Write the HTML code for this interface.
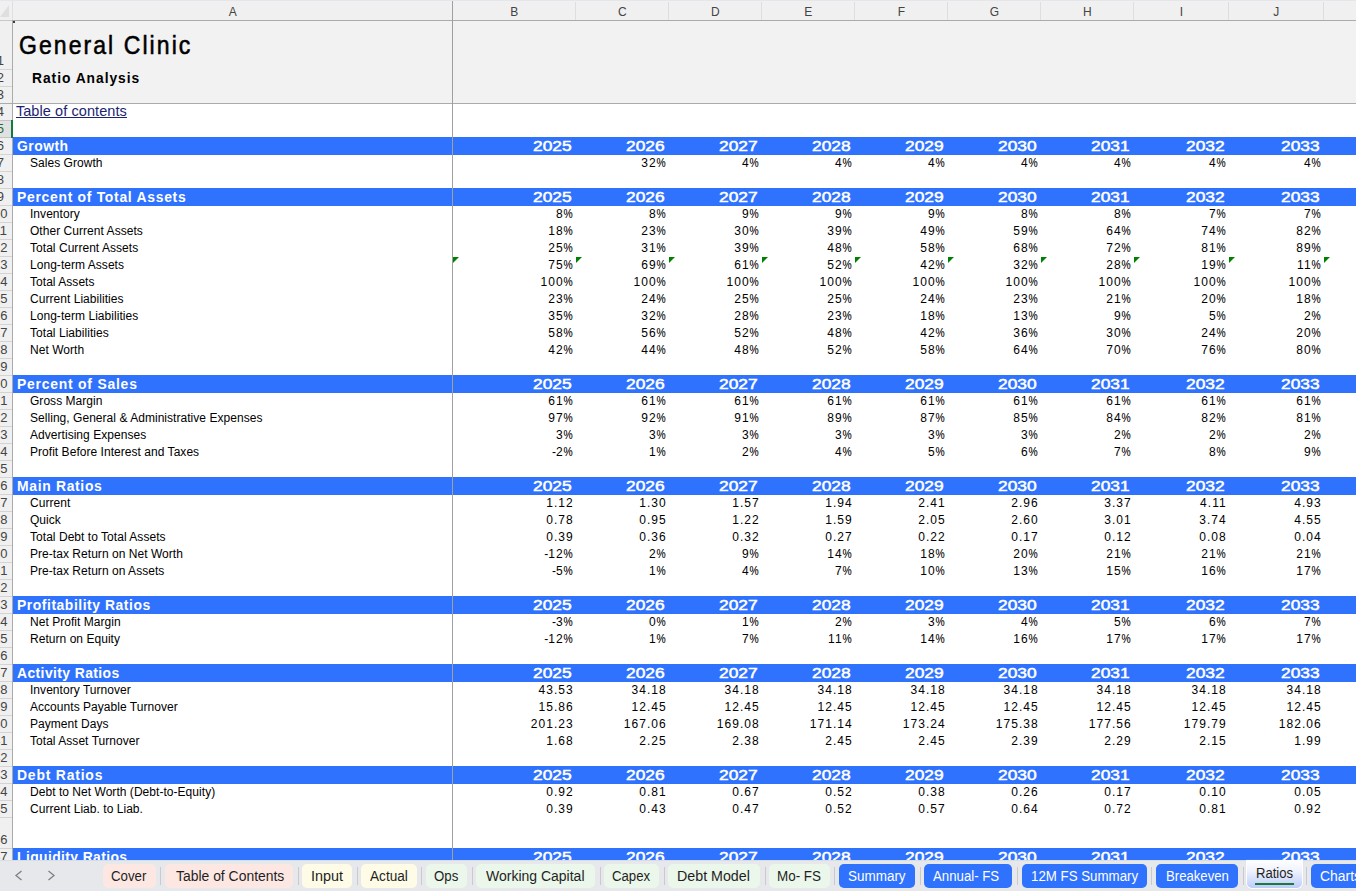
<!DOCTYPE html>
<html><head><meta charset="utf-8"><title>Ratios</title>
<style>
*{margin:0;padding:0;box-sizing:border-box}
html,body{width:1356px;height:891px;overflow:hidden;background:#fff;font-family:"Liberation Sans",sans-serif}
.a{position:absolute}
.t{position:absolute;white-space:nowrap;line-height:1}
.lab{font-size:12px;color:#000;letter-spacing:0.04px}
.num{font-size:12px;color:#000;text-align:right}
.mn{letter-spacing:0}
.pc{display:inline-block;letter-spacing:0;transform:scaleX(0.86);transform-origin:100% 50%;margin-left:-1.8px;-webkit-text-stroke:0.1px #000}
.ch{font-size:12px;color:#444;text-align:center}
.rh{font-size:13px;color:#444;text-align:center}
.tab{position:absolute;top:864px;height:24px;border-radius:5px}
.sep{position:absolute;top:867px;width:1px;height:18px;background:#c9cacc}
.tri{position:absolute;width:0;height:0;border-top:6px solid #008000;border-right:6px solid transparent}
</style></head><body>

<div class="a" style="left:13px;top:21px;width:1343px;height:82px;background:#f2f2f2"></div>
<div class="a" style="left:0;top:0;width:1356px;height:20px;background:#f0f0f0"></div>
<div class="a" style="left:0;top:0;width:1356px;height:1px;background:#e3e7ec"></div>
<div class="a" style="left:0;top:5px;width:0;height:0;border-left:9px solid transparent;border-bottom:12px solid #dfdfdf"></div>
<div class="a" style="left:0;top:21px;width:12px;height:839px;background:#f0f0f0"></div>
<div class="a" style="left:0;top:121px;width:11px;height:16px;background:#e1e1e1"></div>
<div class="a" style="left:575px;top:2px;width:1px;height:18px;background:#dedede"></div>
<div class="a" style="left:668px;top:2px;width:1px;height:18px;background:#dedede"></div>
<div class="a" style="left:761px;top:2px;width:1px;height:18px;background:#dedede"></div>
<div class="a" style="left:854px;top:2px;width:1px;height:18px;background:#dedede"></div>
<div class="a" style="left:947px;top:2px;width:1px;height:18px;background:#dedede"></div>
<div class="a" style="left:1040px;top:2px;width:1px;height:18px;background:#dedede"></div>
<div class="a" style="left:1133px;top:2px;width:1px;height:18px;background:#dedede"></div>
<div class="a" style="left:1228px;top:2px;width:1px;height:18px;background:#dedede"></div>
<div class="a" style="left:1323px;top:2px;width:1px;height:18px;background:#dedede"></div>
<div class="a" style="left:12px;top:1px;width:1px;height:19px;background:#e0e0e0"></div>
<div class="t ch" style="left:212.8px;top:6px;width:40px">A</div>
<div class="t ch" style="left:494.3px;top:6px;width:40px">B</div>
<div class="t ch" style="left:602.3px;top:6px;width:40px">C</div>
<div class="t ch" style="left:695.3px;top:6px;width:40px">D</div>
<div class="t ch" style="left:788.3px;top:6px;width:40px">E</div>
<div class="t ch" style="left:881.3px;top:6px;width:40px">F</div>
<div class="t ch" style="left:974.3px;top:6px;width:40px">G</div>
<div class="t ch" style="left:1067.3px;top:6px;width:40px">H</div>
<div class="t ch" style="left:1161.3px;top:6px;width:40px">I</div>
<div class="t ch" style="left:1256.3px;top:6px;width:40px">J</div>
<div class="t rh" style="left:-19.7px;top:53.7px;width:40px;color:#444">1</div>
<div class="a" style="left:0;top:69px;width:12px;height:1px;background:#d4d4d4"></div>
<div class="t rh" style="left:-19.7px;top:70.7px;width:40px;color:#444">2</div>
<div class="a" style="left:0;top:86px;width:12px;height:1px;background:#d4d4d4"></div>
<div class="t rh" style="left:-19.7px;top:87.7px;width:40px;color:#444">3</div>
<div class="t rh" style="left:-19.7px;top:104.7px;width:40px;color:#444">4</div>
<div class="a" style="left:0;top:120px;width:12px;height:1px;background:#d4d4d4"></div>
<div class="t rh" style="left:-19.7px;top:121.7px;width:40px;color:#1e6b3a">5</div>
<div class="a" style="left:0;top:137px;width:12px;height:1px;background:#d4d4d4"></div>
<div class="t rh" style="left:-19.7px;top:138.7px;width:40px;color:#444">6</div>
<div class="a" style="left:0;top:154px;width:12px;height:1px;background:#d4d4d4"></div>
<div class="t rh" style="left:-19.7px;top:155.7px;width:40px;color:#444">7</div>
<div class="a" style="left:0;top:171px;width:12px;height:1px;background:#d4d4d4"></div>
<div class="t rh" style="left:-19.7px;top:172.7px;width:40px;color:#444">8</div>
<div class="a" style="left:0;top:188px;width:12px;height:1px;background:#d4d4d4"></div>
<div class="t rh" style="left:-19.7px;top:189.7px;width:40px;color:#444">9</div>
<div class="a" style="left:0;top:205px;width:12px;height:1px;background:#d4d4d4"></div>
<div class="t rh" style="left:-19.7px;top:206.7px;width:40px;color:#444">10</div>
<div class="a" style="left:0;top:222px;width:12px;height:1px;background:#d4d4d4"></div>
<div class="t rh" style="left:-19.7px;top:223.7px;width:40px;color:#444">11</div>
<div class="a" style="left:0;top:239px;width:12px;height:1px;background:#d4d4d4"></div>
<div class="t rh" style="left:-19.7px;top:240.7px;width:40px;color:#444">12</div>
<div class="a" style="left:0;top:256px;width:12px;height:1px;background:#d4d4d4"></div>
<div class="t rh" style="left:-19.7px;top:257.7px;width:40px;color:#444">13</div>
<div class="a" style="left:0;top:273px;width:12px;height:1px;background:#d4d4d4"></div>
<div class="t rh" style="left:-19.7px;top:274.7px;width:40px;color:#444">14</div>
<div class="a" style="left:0;top:290px;width:12px;height:1px;background:#d4d4d4"></div>
<div class="t rh" style="left:-19.7px;top:291.7px;width:40px;color:#444">15</div>
<div class="a" style="left:0;top:307px;width:12px;height:1px;background:#d4d4d4"></div>
<div class="t rh" style="left:-19.7px;top:308.7px;width:40px;color:#444">16</div>
<div class="a" style="left:0;top:324px;width:12px;height:1px;background:#d4d4d4"></div>
<div class="t rh" style="left:-19.7px;top:325.7px;width:40px;color:#444">17</div>
<div class="a" style="left:0;top:341px;width:12px;height:1px;background:#d4d4d4"></div>
<div class="t rh" style="left:-19.7px;top:342.7px;width:40px;color:#444">18</div>
<div class="a" style="left:0;top:358px;width:12px;height:1px;background:#d4d4d4"></div>
<div class="t rh" style="left:-19.7px;top:359.7px;width:40px;color:#444">19</div>
<div class="a" style="left:0;top:375px;width:12px;height:1px;background:#d4d4d4"></div>
<div class="t rh" style="left:-19.7px;top:376.7px;width:40px;color:#444">20</div>
<div class="a" style="left:0;top:392px;width:12px;height:1px;background:#d4d4d4"></div>
<div class="t rh" style="left:-19.7px;top:393.7px;width:40px;color:#444">21</div>
<div class="a" style="left:0;top:409px;width:12px;height:1px;background:#d4d4d4"></div>
<div class="t rh" style="left:-19.7px;top:410.7px;width:40px;color:#444">22</div>
<div class="a" style="left:0;top:426px;width:12px;height:1px;background:#d4d4d4"></div>
<div class="t rh" style="left:-19.7px;top:427.7px;width:40px;color:#444">23</div>
<div class="a" style="left:0;top:443px;width:12px;height:1px;background:#d4d4d4"></div>
<div class="t rh" style="left:-19.7px;top:444.7px;width:40px;color:#444">24</div>
<div class="a" style="left:0;top:460px;width:12px;height:1px;background:#d4d4d4"></div>
<div class="t rh" style="left:-19.7px;top:461.7px;width:40px;color:#444">25</div>
<div class="a" style="left:0;top:477px;width:12px;height:1px;background:#d4d4d4"></div>
<div class="t rh" style="left:-19.7px;top:478.7px;width:40px;color:#444">26</div>
<div class="a" style="left:0;top:494px;width:12px;height:1px;background:#d4d4d4"></div>
<div class="t rh" style="left:-19.7px;top:495.7px;width:40px;color:#444">27</div>
<div class="a" style="left:0;top:511px;width:12px;height:1px;background:#d4d4d4"></div>
<div class="t rh" style="left:-19.7px;top:512.7px;width:40px;color:#444">28</div>
<div class="a" style="left:0;top:528px;width:12px;height:1px;background:#d4d4d4"></div>
<div class="t rh" style="left:-19.7px;top:529.7px;width:40px;color:#444">29</div>
<div class="a" style="left:0;top:545px;width:12px;height:1px;background:#d4d4d4"></div>
<div class="t rh" style="left:-19.7px;top:546.7px;width:40px;color:#444">30</div>
<div class="a" style="left:0;top:562px;width:12px;height:1px;background:#d4d4d4"></div>
<div class="t rh" style="left:-19.7px;top:563.7px;width:40px;color:#444">31</div>
<div class="a" style="left:0;top:579px;width:12px;height:1px;background:#d4d4d4"></div>
<div class="t rh" style="left:-19.7px;top:580.7px;width:40px;color:#444">32</div>
<div class="a" style="left:0;top:596px;width:12px;height:1px;background:#d4d4d4"></div>
<div class="t rh" style="left:-19.7px;top:597.7px;width:40px;color:#444">33</div>
<div class="a" style="left:0;top:613px;width:12px;height:1px;background:#d4d4d4"></div>
<div class="t rh" style="left:-19.7px;top:614.7px;width:40px;color:#444">34</div>
<div class="a" style="left:0;top:630px;width:12px;height:1px;background:#d4d4d4"></div>
<div class="t rh" style="left:-19.7px;top:631.7px;width:40px;color:#444">35</div>
<div class="a" style="left:0;top:647px;width:12px;height:1px;background:#d4d4d4"></div>
<div class="t rh" style="left:-19.7px;top:648.7px;width:40px;color:#444">36</div>
<div class="a" style="left:0;top:664px;width:12px;height:1px;background:#d4d4d4"></div>
<div class="t rh" style="left:-19.7px;top:665.7px;width:40px;color:#444">37</div>
<div class="a" style="left:0;top:681px;width:12px;height:1px;background:#d4d4d4"></div>
<div class="t rh" style="left:-19.7px;top:682.7px;width:40px;color:#444">38</div>
<div class="a" style="left:0;top:698px;width:12px;height:1px;background:#d4d4d4"></div>
<div class="t rh" style="left:-19.7px;top:699.7px;width:40px;color:#444">39</div>
<div class="a" style="left:0;top:715px;width:12px;height:1px;background:#d4d4d4"></div>
<div class="t rh" style="left:-19.7px;top:716.7px;width:40px;color:#444">40</div>
<div class="a" style="left:0;top:732px;width:12px;height:1px;background:#d4d4d4"></div>
<div class="t rh" style="left:-19.7px;top:733.7px;width:40px;color:#444">41</div>
<div class="a" style="left:0;top:749px;width:12px;height:1px;background:#d4d4d4"></div>
<div class="t rh" style="left:-19.7px;top:750.7px;width:40px;color:#444">42</div>
<div class="a" style="left:0;top:766px;width:12px;height:1px;background:#d4d4d4"></div>
<div class="t rh" style="left:-19.7px;top:767.7px;width:40px;color:#444">43</div>
<div class="a" style="left:0;top:783px;width:12px;height:1px;background:#d4d4d4"></div>
<div class="t rh" style="left:-19.7px;top:784.7px;width:40px;color:#444">44</div>
<div class="a" style="left:0;top:800px;width:12px;height:1px;background:#d4d4d4"></div>
<div class="t rh" style="left:-19.7px;top:801.7px;width:40px;color:#444">45</div>
<div class="a" style="left:0;top:817px;width:12px;height:1px;background:#d4d4d4"></div>
<div class="t rh" style="left:-19.7px;top:832.7px;width:40px;color:#444">46</div>
<div class="a" style="left:0;top:848px;width:12px;height:1px;background:#d4d4d4"></div>
<div class="t rh" style="left:-19.7px;top:849.7px;width:40px;color:#444">47</div>
<div class="a" style="left:0;top:120px;width:12px;height:1px;background:#c4c4c4"></div>
<div class="a" style="left:0;top:137px;width:12px;height:1px;background:#c4c4c4"></div>
<div class="a" style="left:13px;top:137px;width:1343px;height:18px;background:#2f72fd"></div>
<div class="a" style="left:13px;top:188px;width:1343px;height:18px;background:#2f72fd"></div>
<div class="a" style="left:13px;top:375px;width:1343px;height:18px;background:#2f72fd"></div>
<div class="a" style="left:13px;top:477px;width:1343px;height:18px;background:#2f72fd"></div>
<div class="a" style="left:13px;top:596px;width:1343px;height:18px;background:#2f72fd"></div>
<div class="a" style="left:13px;top:664px;width:1343px;height:18px;background:#2f72fd"></div>
<div class="a" style="left:13px;top:766px;width:1343px;height:18px;background:#2f72fd"></div>
<div class="a" style="left:13px;top:848px;width:1343px;height:18px;background:#2f72fd"></div>
<div class="a" style="left:12px;top:20px;width:1344px;height:1px;background:#ababab"></div>
<div class="a" style="left:0;top:20px;width:12px;height:1px;background:#c8c8c8"></div>
<div class="a" style="left:0;top:103px;width:1356px;height:1px;background:#ababab"></div>
<div class="a" style="left:12px;top:21px;width:1px;height:839px;background:#ababab"></div>
<div class="a" style="left:452px;top:1px;width:1px;height:859px;background:#9f9f9f"></div>
<div class="a" style="left:11px;top:120px;width:2px;height:18px;background:#107c41"></div>
<div class="a" style="left:13px;top:21px;width:2px;height:2px;border-radius:1px;background:#000"></div>
<div class="t" style="left:18.70px;top:32.74px;font-size:25px;font-weight:normal;color:#000;letter-spacing:2.246px;transform:scaleX(0.92);transform-origin:0 0;-webkit-text-stroke:0.55px #000">General Clinic</div>
<div class="t" style="left:31.70px;top:70.30px;font-size:15px;font-weight:bold;color:#000;letter-spacing:1.056px;transform:scaleX(0.92);transform-origin:0 0;">Ratio Analysis</div>
<div class="t" style="left:15.90px;top:103.53px;font-size:14.5px;font-weight:normal;color:#1a2472;letter-spacing:0.078px;">Table of contents</div>
<div class="a" style="left:16px;top:117px;width:111px;height:1px;background:#1a2472"></div>
<div class="t" style="left:16.90px;top:138.53px;font-size:14.5px;font-weight:bold;color:#fff;letter-spacing:0.496px;transform:scaleX(0.96);transform-origin:0 0;">Growth</div>
<div class="t" style="left:533.20px;top:138.80px;font-size:14.3px;font-weight:normal;color:#fff;transform:scaleX(1.2154);transform-origin:0 0;-webkit-text-stroke:0.5px #fff">2025</div>
<div class="t" style="left:626.20px;top:138.80px;font-size:14.3px;font-weight:normal;color:#fff;transform:scaleX(1.2154);transform-origin:0 0;-webkit-text-stroke:0.5px #fff">2026</div>
<div class="t" style="left:719.20px;top:138.80px;font-size:14.3px;font-weight:normal;color:#fff;transform:scaleX(1.2154);transform-origin:0 0;-webkit-text-stroke:0.5px #fff">2027</div>
<div class="t" style="left:812.20px;top:138.80px;font-size:14.3px;font-weight:normal;color:#fff;transform:scaleX(1.2154);transform-origin:0 0;-webkit-text-stroke:0.5px #fff">2028</div>
<div class="t" style="left:905.20px;top:138.80px;font-size:14.3px;font-weight:normal;color:#fff;transform:scaleX(1.2154);transform-origin:0 0;-webkit-text-stroke:0.5px #fff">2029</div>
<div class="t" style="left:998.20px;top:138.80px;font-size:14.3px;font-weight:normal;color:#fff;transform:scaleX(1.2154);transform-origin:0 0;-webkit-text-stroke:0.5px #fff">2030</div>
<div class="t" style="left:1091.20px;top:138.80px;font-size:14.3px;font-weight:normal;color:#fff;transform:scaleX(1.2154);transform-origin:0 0;-webkit-text-stroke:0.5px #fff">2031</div>
<div class="t" style="left:1186.20px;top:138.80px;font-size:14.3px;font-weight:normal;color:#fff;transform:scaleX(1.2154);transform-origin:0 0;-webkit-text-stroke:0.5px #fff">2032</div>
<div class="t" style="left:1281.20px;top:138.80px;font-size:14.3px;font-weight:normal;color:#fff;transform:scaleX(1.2154);transform-origin:0 0;-webkit-text-stroke:0.5px #fff">2033</div>
<div class="t lab" style="left:30px;top:157px">Sales Growth</div>
<div class="t num" style="left:575px;top:157px;width:90.60px;letter-spacing:1.1px">32<span class="pc">%</span></div>
<div class="t num" style="left:668px;top:157px;width:90.60px;letter-spacing:1.1px">4<span class="pc">%</span></div>
<div class="t num" style="left:761px;top:157px;width:90.60px;letter-spacing:1.1px">4<span class="pc">%</span></div>
<div class="t num" style="left:854px;top:157px;width:90.60px;letter-spacing:1.1px">4<span class="pc">%</span></div>
<div class="t num" style="left:947px;top:157px;width:90.60px;letter-spacing:1.1px">4<span class="pc">%</span></div>
<div class="t num" style="left:1040px;top:157px;width:90.60px;letter-spacing:1.1px">4<span class="pc">%</span></div>
<div class="t num" style="left:1133px;top:157px;width:92.60px;letter-spacing:1.1px">4<span class="pc">%</span></div>
<div class="t num" style="left:1228px;top:157px;width:92.60px;letter-spacing:1.1px">4<span class="pc">%</span></div>
<div class="t" style="left:17.30px;top:189.53px;font-size:14.5px;font-weight:bold;color:#fff;letter-spacing:0.735px;transform:scaleX(0.96);transform-origin:0 0;">Percent of Total Assets</div>
<div class="t" style="left:533.20px;top:189.80px;font-size:14.3px;font-weight:normal;color:#fff;transform:scaleX(1.2154);transform-origin:0 0;-webkit-text-stroke:0.5px #fff">2025</div>
<div class="t" style="left:626.20px;top:189.80px;font-size:14.3px;font-weight:normal;color:#fff;transform:scaleX(1.2154);transform-origin:0 0;-webkit-text-stroke:0.5px #fff">2026</div>
<div class="t" style="left:719.20px;top:189.80px;font-size:14.3px;font-weight:normal;color:#fff;transform:scaleX(1.2154);transform-origin:0 0;-webkit-text-stroke:0.5px #fff">2027</div>
<div class="t" style="left:812.20px;top:189.80px;font-size:14.3px;font-weight:normal;color:#fff;transform:scaleX(1.2154);transform-origin:0 0;-webkit-text-stroke:0.5px #fff">2028</div>
<div class="t" style="left:905.20px;top:189.80px;font-size:14.3px;font-weight:normal;color:#fff;transform:scaleX(1.2154);transform-origin:0 0;-webkit-text-stroke:0.5px #fff">2029</div>
<div class="t" style="left:998.20px;top:189.80px;font-size:14.3px;font-weight:normal;color:#fff;transform:scaleX(1.2154);transform-origin:0 0;-webkit-text-stroke:0.5px #fff">2030</div>
<div class="t" style="left:1091.20px;top:189.80px;font-size:14.3px;font-weight:normal;color:#fff;transform:scaleX(1.2154);transform-origin:0 0;-webkit-text-stroke:0.5px #fff">2031</div>
<div class="t" style="left:1186.20px;top:189.80px;font-size:14.3px;font-weight:normal;color:#fff;transform:scaleX(1.2154);transform-origin:0 0;-webkit-text-stroke:0.5px #fff">2032</div>
<div class="t" style="left:1281.20px;top:189.80px;font-size:14.3px;font-weight:normal;color:#fff;transform:scaleX(1.2154);transform-origin:0 0;-webkit-text-stroke:0.5px #fff">2033</div>
<div class="t lab" style="left:30px;top:208px">Inventory</div>
<div class="t num" style="left:452px;top:208px;width:120.60px;letter-spacing:1.1px">8<span class="pc">%</span></div>
<div class="t num" style="left:575px;top:208px;width:90.60px;letter-spacing:1.1px">8<span class="pc">%</span></div>
<div class="t num" style="left:668px;top:208px;width:90.60px;letter-spacing:1.1px">9<span class="pc">%</span></div>
<div class="t num" style="left:761px;top:208px;width:90.60px;letter-spacing:1.1px">9<span class="pc">%</span></div>
<div class="t num" style="left:854px;top:208px;width:90.60px;letter-spacing:1.1px">9<span class="pc">%</span></div>
<div class="t num" style="left:947px;top:208px;width:90.60px;letter-spacing:1.1px">8<span class="pc">%</span></div>
<div class="t num" style="left:1040px;top:208px;width:90.60px;letter-spacing:1.1px">8<span class="pc">%</span></div>
<div class="t num" style="left:1133px;top:208px;width:92.60px;letter-spacing:1.1px">7<span class="pc">%</span></div>
<div class="t num" style="left:1228px;top:208px;width:92.60px;letter-spacing:1.1px">7<span class="pc">%</span></div>
<div class="t lab" style="left:30px;top:225px">Other Current Assets</div>
<div class="t num" style="left:452px;top:225px;width:120.60px;letter-spacing:1.1px">18<span class="pc">%</span></div>
<div class="t num" style="left:575px;top:225px;width:90.60px;letter-spacing:1.1px">23<span class="pc">%</span></div>
<div class="t num" style="left:668px;top:225px;width:90.60px;letter-spacing:1.1px">30<span class="pc">%</span></div>
<div class="t num" style="left:761px;top:225px;width:90.60px;letter-spacing:1.1px">39<span class="pc">%</span></div>
<div class="t num" style="left:854px;top:225px;width:90.60px;letter-spacing:1.1px">49<span class="pc">%</span></div>
<div class="t num" style="left:947px;top:225px;width:90.60px;letter-spacing:1.1px">59<span class="pc">%</span></div>
<div class="t num" style="left:1040px;top:225px;width:90.60px;letter-spacing:1.1px">64<span class="pc">%</span></div>
<div class="t num" style="left:1133px;top:225px;width:92.60px;letter-spacing:1.1px">74<span class="pc">%</span></div>
<div class="t num" style="left:1228px;top:225px;width:92.60px;letter-spacing:1.1px">82<span class="pc">%</span></div>
<div class="t lab" style="left:30px;top:242px">Total Current Assets</div>
<div class="t num" style="left:452px;top:242px;width:120.60px;letter-spacing:1.1px">25<span class="pc">%</span></div>
<div class="t num" style="left:575px;top:242px;width:90.60px;letter-spacing:1.1px">31<span class="pc">%</span></div>
<div class="t num" style="left:668px;top:242px;width:90.60px;letter-spacing:1.1px">39<span class="pc">%</span></div>
<div class="t num" style="left:761px;top:242px;width:90.60px;letter-spacing:1.1px">48<span class="pc">%</span></div>
<div class="t num" style="left:854px;top:242px;width:90.60px;letter-spacing:1.1px">58<span class="pc">%</span></div>
<div class="t num" style="left:947px;top:242px;width:90.60px;letter-spacing:1.1px">68<span class="pc">%</span></div>
<div class="t num" style="left:1040px;top:242px;width:90.60px;letter-spacing:1.1px">72<span class="pc">%</span></div>
<div class="t num" style="left:1133px;top:242px;width:92.60px;letter-spacing:1.1px">81<span class="pc">%</span></div>
<div class="t num" style="left:1228px;top:242px;width:92.60px;letter-spacing:1.1px">89<span class="pc">%</span></div>
<div class="t lab" style="left:30px;top:259px">Long-term Assets</div>
<div class="t num" style="left:452px;top:259px;width:120.60px;letter-spacing:1.1px">75<span class="pc">%</span></div>
<div class="t num" style="left:575px;top:259px;width:90.60px;letter-spacing:1.1px">69<span class="pc">%</span></div>
<div class="t num" style="left:668px;top:259px;width:90.60px;letter-spacing:1.1px">61<span class="pc">%</span></div>
<div class="t num" style="left:761px;top:259px;width:90.60px;letter-spacing:1.1px">52<span class="pc">%</span></div>
<div class="t num" style="left:854px;top:259px;width:90.60px;letter-spacing:1.1px">42<span class="pc">%</span></div>
<div class="t num" style="left:947px;top:259px;width:90.60px;letter-spacing:1.1px">32<span class="pc">%</span></div>
<div class="t num" style="left:1040px;top:259px;width:90.60px;letter-spacing:1.1px">28<span class="pc">%</span></div>
<div class="t num" style="left:1133px;top:259px;width:92.60px;letter-spacing:1.1px">19<span class="pc">%</span></div>
<div class="t num" style="left:1228px;top:259px;width:92.60px;letter-spacing:1.1px">11<span class="pc">%</span></div>
<div class="t lab" style="left:30px;top:276px">Total Assets</div>
<div class="t num" style="left:452px;top:276px;width:120.60px;letter-spacing:1.1px">100<span class="pc">%</span></div>
<div class="t num" style="left:575px;top:276px;width:90.60px;letter-spacing:1.1px">100<span class="pc">%</span></div>
<div class="t num" style="left:668px;top:276px;width:90.60px;letter-spacing:1.1px">100<span class="pc">%</span></div>
<div class="t num" style="left:761px;top:276px;width:90.60px;letter-spacing:1.1px">100<span class="pc">%</span></div>
<div class="t num" style="left:854px;top:276px;width:90.60px;letter-spacing:1.1px">100<span class="pc">%</span></div>
<div class="t num" style="left:947px;top:276px;width:90.60px;letter-spacing:1.1px">100<span class="pc">%</span></div>
<div class="t num" style="left:1040px;top:276px;width:90.60px;letter-spacing:1.1px">100<span class="pc">%</span></div>
<div class="t num" style="left:1133px;top:276px;width:92.60px;letter-spacing:1.1px">100<span class="pc">%</span></div>
<div class="t num" style="left:1228px;top:276px;width:92.60px;letter-spacing:1.1px">100<span class="pc">%</span></div>
<div class="t lab" style="left:30px;top:293px">Current Liabilities</div>
<div class="t num" style="left:452px;top:293px;width:120.60px;letter-spacing:1.1px">23<span class="pc">%</span></div>
<div class="t num" style="left:575px;top:293px;width:90.60px;letter-spacing:1.1px">24<span class="pc">%</span></div>
<div class="t num" style="left:668px;top:293px;width:90.60px;letter-spacing:1.1px">25<span class="pc">%</span></div>
<div class="t num" style="left:761px;top:293px;width:90.60px;letter-spacing:1.1px">25<span class="pc">%</span></div>
<div class="t num" style="left:854px;top:293px;width:90.60px;letter-spacing:1.1px">24<span class="pc">%</span></div>
<div class="t num" style="left:947px;top:293px;width:90.60px;letter-spacing:1.1px">23<span class="pc">%</span></div>
<div class="t num" style="left:1040px;top:293px;width:90.60px;letter-spacing:1.1px">21<span class="pc">%</span></div>
<div class="t num" style="left:1133px;top:293px;width:92.60px;letter-spacing:1.1px">20<span class="pc">%</span></div>
<div class="t num" style="left:1228px;top:293px;width:92.60px;letter-spacing:1.1px">18<span class="pc">%</span></div>
<div class="t lab" style="left:30px;top:310px">Long-term Liabilities</div>
<div class="t num" style="left:452px;top:310px;width:120.60px;letter-spacing:1.1px">35<span class="pc">%</span></div>
<div class="t num" style="left:575px;top:310px;width:90.60px;letter-spacing:1.1px">32<span class="pc">%</span></div>
<div class="t num" style="left:668px;top:310px;width:90.60px;letter-spacing:1.1px">28<span class="pc">%</span></div>
<div class="t num" style="left:761px;top:310px;width:90.60px;letter-spacing:1.1px">23<span class="pc">%</span></div>
<div class="t num" style="left:854px;top:310px;width:90.60px;letter-spacing:1.1px">18<span class="pc">%</span></div>
<div class="t num" style="left:947px;top:310px;width:90.60px;letter-spacing:1.1px">13<span class="pc">%</span></div>
<div class="t num" style="left:1040px;top:310px;width:90.60px;letter-spacing:1.1px">9<span class="pc">%</span></div>
<div class="t num" style="left:1133px;top:310px;width:92.60px;letter-spacing:1.1px">5<span class="pc">%</span></div>
<div class="t num" style="left:1228px;top:310px;width:92.60px;letter-spacing:1.1px">2<span class="pc">%</span></div>
<div class="t lab" style="left:30px;top:327px">Total Liabilities</div>
<div class="t num" style="left:452px;top:327px;width:120.60px;letter-spacing:1.1px">58<span class="pc">%</span></div>
<div class="t num" style="left:575px;top:327px;width:90.60px;letter-spacing:1.1px">56<span class="pc">%</span></div>
<div class="t num" style="left:668px;top:327px;width:90.60px;letter-spacing:1.1px">52<span class="pc">%</span></div>
<div class="t num" style="left:761px;top:327px;width:90.60px;letter-spacing:1.1px">48<span class="pc">%</span></div>
<div class="t num" style="left:854px;top:327px;width:90.60px;letter-spacing:1.1px">42<span class="pc">%</span></div>
<div class="t num" style="left:947px;top:327px;width:90.60px;letter-spacing:1.1px">36<span class="pc">%</span></div>
<div class="t num" style="left:1040px;top:327px;width:90.60px;letter-spacing:1.1px">30<span class="pc">%</span></div>
<div class="t num" style="left:1133px;top:327px;width:92.60px;letter-spacing:1.1px">24<span class="pc">%</span></div>
<div class="t num" style="left:1228px;top:327px;width:92.60px;letter-spacing:1.1px">20<span class="pc">%</span></div>
<div class="t lab" style="left:30px;top:344px">Net Worth</div>
<div class="t num" style="left:452px;top:344px;width:120.60px;letter-spacing:1.1px">42<span class="pc">%</span></div>
<div class="t num" style="left:575px;top:344px;width:90.60px;letter-spacing:1.1px">44<span class="pc">%</span></div>
<div class="t num" style="left:668px;top:344px;width:90.60px;letter-spacing:1.1px">48<span class="pc">%</span></div>
<div class="t num" style="left:761px;top:344px;width:90.60px;letter-spacing:1.1px">52<span class="pc">%</span></div>
<div class="t num" style="left:854px;top:344px;width:90.60px;letter-spacing:1.1px">58<span class="pc">%</span></div>
<div class="t num" style="left:947px;top:344px;width:90.60px;letter-spacing:1.1px">64<span class="pc">%</span></div>
<div class="t num" style="left:1040px;top:344px;width:90.60px;letter-spacing:1.1px">70<span class="pc">%</span></div>
<div class="t num" style="left:1133px;top:344px;width:92.60px;letter-spacing:1.1px">76<span class="pc">%</span></div>
<div class="t num" style="left:1228px;top:344px;width:92.60px;letter-spacing:1.1px">80<span class="pc">%</span></div>
<div class="t" style="left:17.20px;top:376.53px;font-size:14.5px;font-weight:bold;color:#fff;letter-spacing:0.803px;transform:scaleX(0.96);transform-origin:0 0;">Percent of Sales</div>
<div class="t" style="left:533.20px;top:376.80px;font-size:14.3px;font-weight:normal;color:#fff;transform:scaleX(1.2154);transform-origin:0 0;-webkit-text-stroke:0.5px #fff">2025</div>
<div class="t" style="left:626.20px;top:376.80px;font-size:14.3px;font-weight:normal;color:#fff;transform:scaleX(1.2154);transform-origin:0 0;-webkit-text-stroke:0.5px #fff">2026</div>
<div class="t" style="left:719.20px;top:376.80px;font-size:14.3px;font-weight:normal;color:#fff;transform:scaleX(1.2154);transform-origin:0 0;-webkit-text-stroke:0.5px #fff">2027</div>
<div class="t" style="left:812.20px;top:376.80px;font-size:14.3px;font-weight:normal;color:#fff;transform:scaleX(1.2154);transform-origin:0 0;-webkit-text-stroke:0.5px #fff">2028</div>
<div class="t" style="left:905.20px;top:376.80px;font-size:14.3px;font-weight:normal;color:#fff;transform:scaleX(1.2154);transform-origin:0 0;-webkit-text-stroke:0.5px #fff">2029</div>
<div class="t" style="left:998.20px;top:376.80px;font-size:14.3px;font-weight:normal;color:#fff;transform:scaleX(1.2154);transform-origin:0 0;-webkit-text-stroke:0.5px #fff">2030</div>
<div class="t" style="left:1091.20px;top:376.80px;font-size:14.3px;font-weight:normal;color:#fff;transform:scaleX(1.2154);transform-origin:0 0;-webkit-text-stroke:0.5px #fff">2031</div>
<div class="t" style="left:1186.20px;top:376.80px;font-size:14.3px;font-weight:normal;color:#fff;transform:scaleX(1.2154);transform-origin:0 0;-webkit-text-stroke:0.5px #fff">2032</div>
<div class="t" style="left:1281.20px;top:376.80px;font-size:14.3px;font-weight:normal;color:#fff;transform:scaleX(1.2154);transform-origin:0 0;-webkit-text-stroke:0.5px #fff">2033</div>
<div class="t lab" style="left:30px;top:395px">Gross Margin</div>
<div class="t num" style="left:452px;top:395px;width:120.60px;letter-spacing:1.1px">61<span class="pc">%</span></div>
<div class="t num" style="left:575px;top:395px;width:90.60px;letter-spacing:1.1px">61<span class="pc">%</span></div>
<div class="t num" style="left:668px;top:395px;width:90.60px;letter-spacing:1.1px">61<span class="pc">%</span></div>
<div class="t num" style="left:761px;top:395px;width:90.60px;letter-spacing:1.1px">61<span class="pc">%</span></div>
<div class="t num" style="left:854px;top:395px;width:90.60px;letter-spacing:1.1px">61<span class="pc">%</span></div>
<div class="t num" style="left:947px;top:395px;width:90.60px;letter-spacing:1.1px">61<span class="pc">%</span></div>
<div class="t num" style="left:1040px;top:395px;width:90.60px;letter-spacing:1.1px">61<span class="pc">%</span></div>
<div class="t num" style="left:1133px;top:395px;width:92.60px;letter-spacing:1.1px">61<span class="pc">%</span></div>
<div class="t num" style="left:1228px;top:395px;width:92.60px;letter-spacing:1.1px">61<span class="pc">%</span></div>
<div class="t lab" style="left:30px;top:412px">Selling, General &amp; Administrative Expenses</div>
<div class="t num" style="left:452px;top:412px;width:120.60px;letter-spacing:1.1px">97<span class="pc">%</span></div>
<div class="t num" style="left:575px;top:412px;width:90.60px;letter-spacing:1.1px">92<span class="pc">%</span></div>
<div class="t num" style="left:668px;top:412px;width:90.60px;letter-spacing:1.1px">91<span class="pc">%</span></div>
<div class="t num" style="left:761px;top:412px;width:90.60px;letter-spacing:1.1px">89<span class="pc">%</span></div>
<div class="t num" style="left:854px;top:412px;width:90.60px;letter-spacing:1.1px">87<span class="pc">%</span></div>
<div class="t num" style="left:947px;top:412px;width:90.60px;letter-spacing:1.1px">85<span class="pc">%</span></div>
<div class="t num" style="left:1040px;top:412px;width:90.60px;letter-spacing:1.1px">84<span class="pc">%</span></div>
<div class="t num" style="left:1133px;top:412px;width:92.60px;letter-spacing:1.1px">82<span class="pc">%</span></div>
<div class="t num" style="left:1228px;top:412px;width:92.60px;letter-spacing:1.1px">81<span class="pc">%</span></div>
<div class="t lab" style="left:30px;top:429px">Advertising Expenses</div>
<div class="t num" style="left:452px;top:429px;width:120.60px;letter-spacing:1.1px">3<span class="pc">%</span></div>
<div class="t num" style="left:575px;top:429px;width:90.60px;letter-spacing:1.1px">3<span class="pc">%</span></div>
<div class="t num" style="left:668px;top:429px;width:90.60px;letter-spacing:1.1px">3<span class="pc">%</span></div>
<div class="t num" style="left:761px;top:429px;width:90.60px;letter-spacing:1.1px">3<span class="pc">%</span></div>
<div class="t num" style="left:854px;top:429px;width:90.60px;letter-spacing:1.1px">3<span class="pc">%</span></div>
<div class="t num" style="left:947px;top:429px;width:90.60px;letter-spacing:1.1px">3<span class="pc">%</span></div>
<div class="t num" style="left:1040px;top:429px;width:90.60px;letter-spacing:1.1px">2<span class="pc">%</span></div>
<div class="t num" style="left:1133px;top:429px;width:92.60px;letter-spacing:1.1px">2<span class="pc">%</span></div>
<div class="t num" style="left:1228px;top:429px;width:92.60px;letter-spacing:1.1px">2<span class="pc">%</span></div>
<div class="t lab" style="left:30px;top:446px">Profit Before Interest and Taxes</div>
<div class="t num" style="left:452px;top:446px;width:120.60px;letter-spacing:1.1px"><span class="mn">-</span>2<span class="pc">%</span></div>
<div class="t num" style="left:575px;top:446px;width:90.60px;letter-spacing:1.1px">1<span class="pc">%</span></div>
<div class="t num" style="left:668px;top:446px;width:90.60px;letter-spacing:1.1px">2<span class="pc">%</span></div>
<div class="t num" style="left:761px;top:446px;width:90.60px;letter-spacing:1.1px">4<span class="pc">%</span></div>
<div class="t num" style="left:854px;top:446px;width:90.60px;letter-spacing:1.1px">5<span class="pc">%</span></div>
<div class="t num" style="left:947px;top:446px;width:90.60px;letter-spacing:1.1px">6<span class="pc">%</span></div>
<div class="t num" style="left:1040px;top:446px;width:90.60px;letter-spacing:1.1px">7<span class="pc">%</span></div>
<div class="t num" style="left:1133px;top:446px;width:92.60px;letter-spacing:1.1px">8<span class="pc">%</span></div>
<div class="t num" style="left:1228px;top:446px;width:92.60px;letter-spacing:1.1px">9<span class="pc">%</span></div>
<div class="t" style="left:17.20px;top:478.53px;font-size:14.5px;font-weight:bold;color:#fff;letter-spacing:0.698px;transform:scaleX(0.96);transform-origin:0 0;">Main Ratios</div>
<div class="t" style="left:533.20px;top:478.80px;font-size:14.3px;font-weight:normal;color:#fff;transform:scaleX(1.2154);transform-origin:0 0;-webkit-text-stroke:0.5px #fff">2025</div>
<div class="t" style="left:626.20px;top:478.80px;font-size:14.3px;font-weight:normal;color:#fff;transform:scaleX(1.2154);transform-origin:0 0;-webkit-text-stroke:0.5px #fff">2026</div>
<div class="t" style="left:719.20px;top:478.80px;font-size:14.3px;font-weight:normal;color:#fff;transform:scaleX(1.2154);transform-origin:0 0;-webkit-text-stroke:0.5px #fff">2027</div>
<div class="t" style="left:812.20px;top:478.80px;font-size:14.3px;font-weight:normal;color:#fff;transform:scaleX(1.2154);transform-origin:0 0;-webkit-text-stroke:0.5px #fff">2028</div>
<div class="t" style="left:905.20px;top:478.80px;font-size:14.3px;font-weight:normal;color:#fff;transform:scaleX(1.2154);transform-origin:0 0;-webkit-text-stroke:0.5px #fff">2029</div>
<div class="t" style="left:998.20px;top:478.80px;font-size:14.3px;font-weight:normal;color:#fff;transform:scaleX(1.2154);transform-origin:0 0;-webkit-text-stroke:0.5px #fff">2030</div>
<div class="t" style="left:1091.20px;top:478.80px;font-size:14.3px;font-weight:normal;color:#fff;transform:scaleX(1.2154);transform-origin:0 0;-webkit-text-stroke:0.5px #fff">2031</div>
<div class="t" style="left:1186.20px;top:478.80px;font-size:14.3px;font-weight:normal;color:#fff;transform:scaleX(1.2154);transform-origin:0 0;-webkit-text-stroke:0.5px #fff">2032</div>
<div class="t" style="left:1281.20px;top:478.80px;font-size:14.3px;font-weight:normal;color:#fff;transform:scaleX(1.2154);transform-origin:0 0;-webkit-text-stroke:0.5px #fff">2033</div>
<div class="t lab" style="left:30px;top:497px">Current</div>
<div class="t num" style="left:452px;top:497px;width:121.75px;letter-spacing:1.05px">1.12</div>
<div class="t num" style="left:575px;top:497px;width:91.75px;letter-spacing:1.05px">1.30</div>
<div class="t num" style="left:668px;top:497px;width:91.75px;letter-spacing:1.05px">1.57</div>
<div class="t num" style="left:761px;top:497px;width:91.75px;letter-spacing:1.05px">1.94</div>
<div class="t num" style="left:854px;top:497px;width:91.75px;letter-spacing:1.05px">2.41</div>
<div class="t num" style="left:947px;top:497px;width:91.75px;letter-spacing:1.05px">2.96</div>
<div class="t num" style="left:1040px;top:497px;width:91.75px;letter-spacing:1.05px">3.37</div>
<div class="t num" style="left:1133px;top:497px;width:93.75px;letter-spacing:1.05px">4.11</div>
<div class="t num" style="left:1228px;top:497px;width:93.75px;letter-spacing:1.05px">4.93</div>
<div class="t lab" style="left:30px;top:514px">Quick</div>
<div class="t num" style="left:452px;top:514px;width:121.75px;letter-spacing:1.05px">0.78</div>
<div class="t num" style="left:575px;top:514px;width:91.75px;letter-spacing:1.05px">0.95</div>
<div class="t num" style="left:668px;top:514px;width:91.75px;letter-spacing:1.05px">1.22</div>
<div class="t num" style="left:761px;top:514px;width:91.75px;letter-spacing:1.05px">1.59</div>
<div class="t num" style="left:854px;top:514px;width:91.75px;letter-spacing:1.05px">2.05</div>
<div class="t num" style="left:947px;top:514px;width:91.75px;letter-spacing:1.05px">2.60</div>
<div class="t num" style="left:1040px;top:514px;width:91.75px;letter-spacing:1.05px">3.01</div>
<div class="t num" style="left:1133px;top:514px;width:93.75px;letter-spacing:1.05px">3.74</div>
<div class="t num" style="left:1228px;top:514px;width:93.75px;letter-spacing:1.05px">4.55</div>
<div class="t lab" style="left:30px;top:531px">Total Debt to Total Assets</div>
<div class="t num" style="left:452px;top:531px;width:121.75px;letter-spacing:1.05px">0.39</div>
<div class="t num" style="left:575px;top:531px;width:91.75px;letter-spacing:1.05px">0.36</div>
<div class="t num" style="left:668px;top:531px;width:91.75px;letter-spacing:1.05px">0.32</div>
<div class="t num" style="left:761px;top:531px;width:91.75px;letter-spacing:1.05px">0.27</div>
<div class="t num" style="left:854px;top:531px;width:91.75px;letter-spacing:1.05px">0.22</div>
<div class="t num" style="left:947px;top:531px;width:91.75px;letter-spacing:1.05px">0.17</div>
<div class="t num" style="left:1040px;top:531px;width:91.75px;letter-spacing:1.05px">0.12</div>
<div class="t num" style="left:1133px;top:531px;width:93.75px;letter-spacing:1.05px">0.08</div>
<div class="t num" style="left:1228px;top:531px;width:93.75px;letter-spacing:1.05px">0.04</div>
<div class="t lab" style="left:30px;top:548px">Pre-tax Return on Net Worth</div>
<div class="t num" style="left:452px;top:548px;width:120.60px;letter-spacing:1.1px"><span class="mn">-</span>12<span class="pc">%</span></div>
<div class="t num" style="left:575px;top:548px;width:90.60px;letter-spacing:1.1px">2<span class="pc">%</span></div>
<div class="t num" style="left:668px;top:548px;width:90.60px;letter-spacing:1.1px">9<span class="pc">%</span></div>
<div class="t num" style="left:761px;top:548px;width:90.60px;letter-spacing:1.1px">14<span class="pc">%</span></div>
<div class="t num" style="left:854px;top:548px;width:90.60px;letter-spacing:1.1px">18<span class="pc">%</span></div>
<div class="t num" style="left:947px;top:548px;width:90.60px;letter-spacing:1.1px">20<span class="pc">%</span></div>
<div class="t num" style="left:1040px;top:548px;width:90.60px;letter-spacing:1.1px">21<span class="pc">%</span></div>
<div class="t num" style="left:1133px;top:548px;width:92.60px;letter-spacing:1.1px">21<span class="pc">%</span></div>
<div class="t num" style="left:1228px;top:548px;width:92.60px;letter-spacing:1.1px">21<span class="pc">%</span></div>
<div class="t lab" style="left:30px;top:565px">Pre-tax Return on Assets</div>
<div class="t num" style="left:452px;top:565px;width:120.60px;letter-spacing:1.1px"><span class="mn">-</span>5<span class="pc">%</span></div>
<div class="t num" style="left:575px;top:565px;width:90.60px;letter-spacing:1.1px">1<span class="pc">%</span></div>
<div class="t num" style="left:668px;top:565px;width:90.60px;letter-spacing:1.1px">4<span class="pc">%</span></div>
<div class="t num" style="left:761px;top:565px;width:90.60px;letter-spacing:1.1px">7<span class="pc">%</span></div>
<div class="t num" style="left:854px;top:565px;width:90.60px;letter-spacing:1.1px">10<span class="pc">%</span></div>
<div class="t num" style="left:947px;top:565px;width:90.60px;letter-spacing:1.1px">13<span class="pc">%</span></div>
<div class="t num" style="left:1040px;top:565px;width:90.60px;letter-spacing:1.1px">15<span class="pc">%</span></div>
<div class="t num" style="left:1133px;top:565px;width:92.60px;letter-spacing:1.1px">16<span class="pc">%</span></div>
<div class="t num" style="left:1228px;top:565px;width:92.60px;letter-spacing:1.1px">17<span class="pc">%</span></div>
<div class="t" style="left:16.90px;top:597.53px;font-size:14.5px;font-weight:bold;color:#fff;letter-spacing:0.561px;transform:scaleX(0.96);transform-origin:0 0;">Profitability Ratios</div>
<div class="t" style="left:533.20px;top:597.80px;font-size:14.3px;font-weight:normal;color:#fff;transform:scaleX(1.2154);transform-origin:0 0;-webkit-text-stroke:0.5px #fff">2025</div>
<div class="t" style="left:626.20px;top:597.80px;font-size:14.3px;font-weight:normal;color:#fff;transform:scaleX(1.2154);transform-origin:0 0;-webkit-text-stroke:0.5px #fff">2026</div>
<div class="t" style="left:719.20px;top:597.80px;font-size:14.3px;font-weight:normal;color:#fff;transform:scaleX(1.2154);transform-origin:0 0;-webkit-text-stroke:0.5px #fff">2027</div>
<div class="t" style="left:812.20px;top:597.80px;font-size:14.3px;font-weight:normal;color:#fff;transform:scaleX(1.2154);transform-origin:0 0;-webkit-text-stroke:0.5px #fff">2028</div>
<div class="t" style="left:905.20px;top:597.80px;font-size:14.3px;font-weight:normal;color:#fff;transform:scaleX(1.2154);transform-origin:0 0;-webkit-text-stroke:0.5px #fff">2029</div>
<div class="t" style="left:998.20px;top:597.80px;font-size:14.3px;font-weight:normal;color:#fff;transform:scaleX(1.2154);transform-origin:0 0;-webkit-text-stroke:0.5px #fff">2030</div>
<div class="t" style="left:1091.20px;top:597.80px;font-size:14.3px;font-weight:normal;color:#fff;transform:scaleX(1.2154);transform-origin:0 0;-webkit-text-stroke:0.5px #fff">2031</div>
<div class="t" style="left:1186.20px;top:597.80px;font-size:14.3px;font-weight:normal;color:#fff;transform:scaleX(1.2154);transform-origin:0 0;-webkit-text-stroke:0.5px #fff">2032</div>
<div class="t" style="left:1281.20px;top:597.80px;font-size:14.3px;font-weight:normal;color:#fff;transform:scaleX(1.2154);transform-origin:0 0;-webkit-text-stroke:0.5px #fff">2033</div>
<div class="t lab" style="left:30px;top:616px">Net Profit Margin</div>
<div class="t num" style="left:452px;top:616px;width:120.60px;letter-spacing:1.1px"><span class="mn">-</span>3<span class="pc">%</span></div>
<div class="t num" style="left:575px;top:616px;width:90.60px;letter-spacing:1.1px">0<span class="pc">%</span></div>
<div class="t num" style="left:668px;top:616px;width:90.60px;letter-spacing:1.1px">1<span class="pc">%</span></div>
<div class="t num" style="left:761px;top:616px;width:90.60px;letter-spacing:1.1px">2<span class="pc">%</span></div>
<div class="t num" style="left:854px;top:616px;width:90.60px;letter-spacing:1.1px">3<span class="pc">%</span></div>
<div class="t num" style="left:947px;top:616px;width:90.60px;letter-spacing:1.1px">4<span class="pc">%</span></div>
<div class="t num" style="left:1040px;top:616px;width:90.60px;letter-spacing:1.1px">5<span class="pc">%</span></div>
<div class="t num" style="left:1133px;top:616px;width:92.60px;letter-spacing:1.1px">6<span class="pc">%</span></div>
<div class="t num" style="left:1228px;top:616px;width:92.60px;letter-spacing:1.1px">7<span class="pc">%</span></div>
<div class="t lab" style="left:30px;top:633px">Return on Equity</div>
<div class="t num" style="left:452px;top:633px;width:120.60px;letter-spacing:1.1px"><span class="mn">-</span>12<span class="pc">%</span></div>
<div class="t num" style="left:575px;top:633px;width:90.60px;letter-spacing:1.1px">1<span class="pc">%</span></div>
<div class="t num" style="left:668px;top:633px;width:90.60px;letter-spacing:1.1px">7<span class="pc">%</span></div>
<div class="t num" style="left:761px;top:633px;width:90.60px;letter-spacing:1.1px">11<span class="pc">%</span></div>
<div class="t num" style="left:854px;top:633px;width:90.60px;letter-spacing:1.1px">14<span class="pc">%</span></div>
<div class="t num" style="left:947px;top:633px;width:90.60px;letter-spacing:1.1px">16<span class="pc">%</span></div>
<div class="t num" style="left:1040px;top:633px;width:90.60px;letter-spacing:1.1px">17<span class="pc">%</span></div>
<div class="t num" style="left:1133px;top:633px;width:92.60px;letter-spacing:1.1px">17<span class="pc">%</span></div>
<div class="t num" style="left:1228px;top:633px;width:92.60px;letter-spacing:1.1px">17<span class="pc">%</span></div>
<div class="t" style="left:16.60px;top:665.53px;font-size:14.5px;font-weight:bold;color:#fff;letter-spacing:0.411px;transform:scaleX(0.96);transform-origin:0 0;">Activity Ratios</div>
<div class="t" style="left:533.20px;top:665.80px;font-size:14.3px;font-weight:normal;color:#fff;transform:scaleX(1.2154);transform-origin:0 0;-webkit-text-stroke:0.5px #fff">2025</div>
<div class="t" style="left:626.20px;top:665.80px;font-size:14.3px;font-weight:normal;color:#fff;transform:scaleX(1.2154);transform-origin:0 0;-webkit-text-stroke:0.5px #fff">2026</div>
<div class="t" style="left:719.20px;top:665.80px;font-size:14.3px;font-weight:normal;color:#fff;transform:scaleX(1.2154);transform-origin:0 0;-webkit-text-stroke:0.5px #fff">2027</div>
<div class="t" style="left:812.20px;top:665.80px;font-size:14.3px;font-weight:normal;color:#fff;transform:scaleX(1.2154);transform-origin:0 0;-webkit-text-stroke:0.5px #fff">2028</div>
<div class="t" style="left:905.20px;top:665.80px;font-size:14.3px;font-weight:normal;color:#fff;transform:scaleX(1.2154);transform-origin:0 0;-webkit-text-stroke:0.5px #fff">2029</div>
<div class="t" style="left:998.20px;top:665.80px;font-size:14.3px;font-weight:normal;color:#fff;transform:scaleX(1.2154);transform-origin:0 0;-webkit-text-stroke:0.5px #fff">2030</div>
<div class="t" style="left:1091.20px;top:665.80px;font-size:14.3px;font-weight:normal;color:#fff;transform:scaleX(1.2154);transform-origin:0 0;-webkit-text-stroke:0.5px #fff">2031</div>
<div class="t" style="left:1186.20px;top:665.80px;font-size:14.3px;font-weight:normal;color:#fff;transform:scaleX(1.2154);transform-origin:0 0;-webkit-text-stroke:0.5px #fff">2032</div>
<div class="t" style="left:1281.20px;top:665.80px;font-size:14.3px;font-weight:normal;color:#fff;transform:scaleX(1.2154);transform-origin:0 0;-webkit-text-stroke:0.5px #fff">2033</div>
<div class="t lab" style="left:30px;top:684px">Inventory Turnover</div>
<div class="t num" style="left:452px;top:684px;width:121.75px;letter-spacing:1.05px">43.53</div>
<div class="t num" style="left:575px;top:684px;width:91.75px;letter-spacing:1.05px">34.18</div>
<div class="t num" style="left:668px;top:684px;width:91.75px;letter-spacing:1.05px">34.18</div>
<div class="t num" style="left:761px;top:684px;width:91.75px;letter-spacing:1.05px">34.18</div>
<div class="t num" style="left:854px;top:684px;width:91.75px;letter-spacing:1.05px">34.18</div>
<div class="t num" style="left:947px;top:684px;width:91.75px;letter-spacing:1.05px">34.18</div>
<div class="t num" style="left:1040px;top:684px;width:91.75px;letter-spacing:1.05px">34.18</div>
<div class="t num" style="left:1133px;top:684px;width:93.75px;letter-spacing:1.05px">34.18</div>
<div class="t num" style="left:1228px;top:684px;width:93.75px;letter-spacing:1.05px">34.18</div>
<div class="t lab" style="left:30px;top:701px">Accounts Payable Turnover</div>
<div class="t num" style="left:452px;top:701px;width:121.75px;letter-spacing:1.05px">15.86</div>
<div class="t num" style="left:575px;top:701px;width:91.75px;letter-spacing:1.05px">12.45</div>
<div class="t num" style="left:668px;top:701px;width:91.75px;letter-spacing:1.05px">12.45</div>
<div class="t num" style="left:761px;top:701px;width:91.75px;letter-spacing:1.05px">12.45</div>
<div class="t num" style="left:854px;top:701px;width:91.75px;letter-spacing:1.05px">12.45</div>
<div class="t num" style="left:947px;top:701px;width:91.75px;letter-spacing:1.05px">12.45</div>
<div class="t num" style="left:1040px;top:701px;width:91.75px;letter-spacing:1.05px">12.45</div>
<div class="t num" style="left:1133px;top:701px;width:93.75px;letter-spacing:1.05px">12.45</div>
<div class="t num" style="left:1228px;top:701px;width:93.75px;letter-spacing:1.05px">12.45</div>
<div class="t lab" style="left:30px;top:718px">Payment Days</div>
<div class="t num" style="left:452px;top:718px;width:121.75px;letter-spacing:1.05px">201.23</div>
<div class="t num" style="left:575px;top:718px;width:91.75px;letter-spacing:1.05px">167.06</div>
<div class="t num" style="left:668px;top:718px;width:91.75px;letter-spacing:1.05px">169.08</div>
<div class="t num" style="left:761px;top:718px;width:91.75px;letter-spacing:1.05px">171.14</div>
<div class="t num" style="left:854px;top:718px;width:91.75px;letter-spacing:1.05px">173.24</div>
<div class="t num" style="left:947px;top:718px;width:91.75px;letter-spacing:1.05px">175.38</div>
<div class="t num" style="left:1040px;top:718px;width:91.75px;letter-spacing:1.05px">177.56</div>
<div class="t num" style="left:1133px;top:718px;width:93.75px;letter-spacing:1.05px">179.79</div>
<div class="t num" style="left:1228px;top:718px;width:93.75px;letter-spacing:1.05px">182.06</div>
<div class="t lab" style="left:30px;top:735px">Total Asset Turnover</div>
<div class="t num" style="left:452px;top:735px;width:121.75px;letter-spacing:1.05px">1.68</div>
<div class="t num" style="left:575px;top:735px;width:91.75px;letter-spacing:1.05px">2.25</div>
<div class="t num" style="left:668px;top:735px;width:91.75px;letter-spacing:1.05px">2.38</div>
<div class="t num" style="left:761px;top:735px;width:91.75px;letter-spacing:1.05px">2.45</div>
<div class="t num" style="left:854px;top:735px;width:91.75px;letter-spacing:1.05px">2.45</div>
<div class="t num" style="left:947px;top:735px;width:91.75px;letter-spacing:1.05px">2.39</div>
<div class="t num" style="left:1040px;top:735px;width:91.75px;letter-spacing:1.05px">2.29</div>
<div class="t num" style="left:1133px;top:735px;width:93.75px;letter-spacing:1.05px">2.15</div>
<div class="t num" style="left:1228px;top:735px;width:93.75px;letter-spacing:1.05px">1.99</div>
<div class="t" style="left:16.90px;top:767.53px;font-size:14.5px;font-weight:bold;color:#fff;letter-spacing:0.841px;transform:scaleX(0.96);transform-origin:0 0;">Debt Ratios</div>
<div class="t" style="left:533.20px;top:767.80px;font-size:14.3px;font-weight:normal;color:#fff;transform:scaleX(1.2154);transform-origin:0 0;-webkit-text-stroke:0.5px #fff">2025</div>
<div class="t" style="left:626.20px;top:767.80px;font-size:14.3px;font-weight:normal;color:#fff;transform:scaleX(1.2154);transform-origin:0 0;-webkit-text-stroke:0.5px #fff">2026</div>
<div class="t" style="left:719.20px;top:767.80px;font-size:14.3px;font-weight:normal;color:#fff;transform:scaleX(1.2154);transform-origin:0 0;-webkit-text-stroke:0.5px #fff">2027</div>
<div class="t" style="left:812.20px;top:767.80px;font-size:14.3px;font-weight:normal;color:#fff;transform:scaleX(1.2154);transform-origin:0 0;-webkit-text-stroke:0.5px #fff">2028</div>
<div class="t" style="left:905.20px;top:767.80px;font-size:14.3px;font-weight:normal;color:#fff;transform:scaleX(1.2154);transform-origin:0 0;-webkit-text-stroke:0.5px #fff">2029</div>
<div class="t" style="left:998.20px;top:767.80px;font-size:14.3px;font-weight:normal;color:#fff;transform:scaleX(1.2154);transform-origin:0 0;-webkit-text-stroke:0.5px #fff">2030</div>
<div class="t" style="left:1091.20px;top:767.80px;font-size:14.3px;font-weight:normal;color:#fff;transform:scaleX(1.2154);transform-origin:0 0;-webkit-text-stroke:0.5px #fff">2031</div>
<div class="t" style="left:1186.20px;top:767.80px;font-size:14.3px;font-weight:normal;color:#fff;transform:scaleX(1.2154);transform-origin:0 0;-webkit-text-stroke:0.5px #fff">2032</div>
<div class="t" style="left:1281.20px;top:767.80px;font-size:14.3px;font-weight:normal;color:#fff;transform:scaleX(1.2154);transform-origin:0 0;-webkit-text-stroke:0.5px #fff">2033</div>
<div class="t lab" style="left:30px;top:786px">Debt to Net Worth (Debt-to-Equity)</div>
<div class="t num" style="left:452px;top:786px;width:121.75px;letter-spacing:1.05px">0.92</div>
<div class="t num" style="left:575px;top:786px;width:91.75px;letter-spacing:1.05px">0.81</div>
<div class="t num" style="left:668px;top:786px;width:91.75px;letter-spacing:1.05px">0.67</div>
<div class="t num" style="left:761px;top:786px;width:91.75px;letter-spacing:1.05px">0.52</div>
<div class="t num" style="left:854px;top:786px;width:91.75px;letter-spacing:1.05px">0.38</div>
<div class="t num" style="left:947px;top:786px;width:91.75px;letter-spacing:1.05px">0.26</div>
<div class="t num" style="left:1040px;top:786px;width:91.75px;letter-spacing:1.05px">0.17</div>
<div class="t num" style="left:1133px;top:786px;width:93.75px;letter-spacing:1.05px">0.10</div>
<div class="t num" style="left:1228px;top:786px;width:93.75px;letter-spacing:1.05px">0.05</div>
<div class="t lab" style="left:30px;top:803px">Current Liab. to Liab.</div>
<div class="t num" style="left:452px;top:803px;width:121.75px;letter-spacing:1.05px">0.39</div>
<div class="t num" style="left:575px;top:803px;width:91.75px;letter-spacing:1.05px">0.43</div>
<div class="t num" style="left:668px;top:803px;width:91.75px;letter-spacing:1.05px">0.47</div>
<div class="t num" style="left:761px;top:803px;width:91.75px;letter-spacing:1.05px">0.52</div>
<div class="t num" style="left:854px;top:803px;width:91.75px;letter-spacing:1.05px">0.57</div>
<div class="t num" style="left:947px;top:803px;width:91.75px;letter-spacing:1.05px">0.64</div>
<div class="t num" style="left:1040px;top:803px;width:91.75px;letter-spacing:1.05px">0.72</div>
<div class="t num" style="left:1133px;top:803px;width:93.75px;letter-spacing:1.05px">0.81</div>
<div class="t num" style="left:1228px;top:803px;width:93.75px;letter-spacing:1.05px">0.92</div>
<div class="t" style="left:16.90px;top:849.53px;font-size:14.5px;font-weight:bold;color:#fff;letter-spacing:0.396px;transform:scaleX(0.96);transform-origin:0 0;">Liquidity Ratios</div>
<div class="t" style="left:533.20px;top:849.80px;font-size:14.3px;font-weight:normal;color:#fff;transform:scaleX(1.2154);transform-origin:0 0;-webkit-text-stroke:0.5px #fff">2025</div>
<div class="t" style="left:626.20px;top:849.80px;font-size:14.3px;font-weight:normal;color:#fff;transform:scaleX(1.2154);transform-origin:0 0;-webkit-text-stroke:0.5px #fff">2026</div>
<div class="t" style="left:719.20px;top:849.80px;font-size:14.3px;font-weight:normal;color:#fff;transform:scaleX(1.2154);transform-origin:0 0;-webkit-text-stroke:0.5px #fff">2027</div>
<div class="t" style="left:812.20px;top:849.80px;font-size:14.3px;font-weight:normal;color:#fff;transform:scaleX(1.2154);transform-origin:0 0;-webkit-text-stroke:0.5px #fff">2028</div>
<div class="t" style="left:905.20px;top:849.80px;font-size:14.3px;font-weight:normal;color:#fff;transform:scaleX(1.2154);transform-origin:0 0;-webkit-text-stroke:0.5px #fff">2029</div>
<div class="t" style="left:998.20px;top:849.80px;font-size:14.3px;font-weight:normal;color:#fff;transform:scaleX(1.2154);transform-origin:0 0;-webkit-text-stroke:0.5px #fff">2030</div>
<div class="t" style="left:1091.20px;top:849.80px;font-size:14.3px;font-weight:normal;color:#fff;transform:scaleX(1.2154);transform-origin:0 0;-webkit-text-stroke:0.5px #fff">2031</div>
<div class="t" style="left:1186.20px;top:849.80px;font-size:14.3px;font-weight:normal;color:#fff;transform:scaleX(1.2154);transform-origin:0 0;-webkit-text-stroke:0.5px #fff">2032</div>
<div class="t" style="left:1281.20px;top:849.80px;font-size:14.3px;font-weight:normal;color:#fff;transform:scaleX(1.2154);transform-origin:0 0;-webkit-text-stroke:0.5px #fff">2033</div>
<div class="tri" style="left:453px;top:257px"></div>
<div class="tri" style="left:576px;top:257px"></div>
<div class="tri" style="left:669px;top:257px"></div>
<div class="tri" style="left:762px;top:257px"></div>
<div class="tri" style="left:855px;top:257px"></div>
<div class="tri" style="left:948px;top:257px"></div>
<div class="tri" style="left:1041px;top:257px"></div>
<div class="tri" style="left:1134px;top:257px"></div>
<div class="tri" style="left:1229px;top:257px"></div>
<div class="tri" style="left:1324px;top:257px"></div>
<div class="a" style="left:0;top:860px;width:1356px;height:31px;background:#e6e8ec"></div>
<div class="a" style="left:0;top:860px;width:1356px;height:1px;background:#dadddf"></div>
<svg class="a" style="left:0;top:860px" width="70" height="31" viewBox="0 0 70 31"><path d="M21.5 11 L16 15.5 L21.5 20" fill="none" stroke="#7d8084" stroke-width="1.3"/><path d="M48.5 11 L54 15.5 L48.5 20" fill="none" stroke="#7d8084" stroke-width="1.3"/></svg>
<div class="sep" style="left:160px"></div>
<div class="sep" style="left:298px"></div>
<div class="sep" style="left:357px"></div>
<div class="sep" style="left:421px"></div>
<div class="sep" style="left:472px"></div>
<div class="sep" style="left:600px"></div>
<div class="sep" style="left:664px"></div>
<div class="sep" style="left:765px"></div>
<div class="sep" style="left:834px"></div>
<div class="sep" style="left:920px"></div>
<div class="sep" style="left:1017px"></div>
<div class="sep" style="left:1151px"></div>
<div class="sep" style="left:1243px"></div>
<div class="sep" style="left:1306px"></div>
<div class="tab" style="left:103px;width:53px;background:#fde7e3"></div>
<div class="t" style="left:111.40px;top:868.95px;font-size:14px;font-weight:normal;color:#1f1f1f;transform:scaleX(0.9478);transform-origin:0 0;">Cover</div>
<div class="tab" style="left:165px;width:128px;background:#fde7e3"></div>
<div class="t" style="left:175.60px;top:868.95px;font-size:14px;font-weight:normal;color:#1f1f1f;transform:scaleX(0.9940);transform-origin:0 0;">Table of Contents</div>
<div class="tab" style="left:302px;width:50px;background:#fefce7"></div>
<div class="t" style="left:311.00px;top:868.95px;font-size:14px;font-weight:normal;color:#1f1f1f;transform:scaleX(1.0273);transform-origin:0 0;">Input</div>
<div class="tab" style="left:361px;width:56px;background:#fefce7"></div>
<div class="t" style="left:370.20px;top:868.95px;font-size:14px;font-weight:normal;color:#1f1f1f;transform:scaleX(0.9717);transform-origin:0 0;">Actual</div>
<div class="tab" style="left:426px;width:41px;background:#eaf7ea"></div>
<div class="t" style="left:434.30px;top:868.95px;font-size:14px;font-weight:normal;color:#1f1f1f;transform:scaleX(0.9455);transform-origin:0 0;">Ops</div>
<div class="tab" style="left:476px;width:119px;background:#eaf7ea"></div>
<div class="t" style="left:486.30px;top:868.95px;font-size:14px;font-weight:normal;color:#1f1f1f;transform:scaleX(0.9995);transform-origin:0 0;">Working Capital</div>
<div class="tab" style="left:604px;width:55px;background:#eaf7ea"></div>
<div class="t" style="left:612.00px;top:868.95px;font-size:14px;font-weight:normal;color:#1f1f1f;transform:scaleX(0.9419);transform-origin:0 0;">Capex</div>
<div class="tab" style="left:668px;width:92px;background:#eaf7ea"></div>
<div class="t" style="left:677.40px;top:868.95px;font-size:14px;font-weight:normal;color:#1f1f1f;transform:scaleX(1.0182);transform-origin:0 0;">Debt Model</div>
<div class="tab" style="left:769px;width:61px;background:#eaf7ea"></div>
<div class="t" style="left:777.30px;top:868.95px;font-size:14px;font-weight:normal;color:#1f1f1f;transform:scaleX(0.9586);transform-origin:0 0;">Mo- FS</div>
<div class="tab" style="left:839px;width:76px;background:#2f72fd"></div>
<div class="t" style="left:848.30px;top:868.95px;font-size:14px;font-weight:normal;color:#fff;transform:scaleX(0.9616);transform-origin:0 0;">Summary</div>
<div class="tab" style="left:924px;width:88px;background:#2f72fd"></div>
<div class="t" style="left:933.40px;top:868.95px;font-size:14px;font-weight:normal;color:#fff;transform:scaleX(0.9450);transform-origin:0 0;">Annual- FS</div>
<div class="tab" style="left:1022px;width:125px;background:#2f72fd"></div>
<div class="t" style="left:1030.80px;top:868.95px;font-size:14px;font-weight:normal;color:#fff;transform:scaleX(0.9495);transform-origin:0 0;">12M FS Summary</div>
<div class="tab" style="left:1156px;width:82px;background:#2f72fd"></div>
<div class="t" style="left:1165.50px;top:868.95px;font-size:14px;font-weight:normal;color:#fff;transform:scaleX(0.9395);transform-origin:0 0;">Breakeven</div>
<div class="tab" style="left:1311px;width:79px;background:#2f72fd"></div>
<div class="t" style="left:1320.00px;top:868.95px;font-size:14px;font-weight:normal;color:#fff;transform:scaleX(0.9939);transform-origin:0 0;">Charts</div>
<div class="a" style="left:1246px;top:860px;width:57px;height:29px;border-radius:0 0 6px 6px;background:linear-gradient(#ffffff 0%,#eef2fd 40%,#bccdfa 100%);border:1.5px solid #fdfdfd;border-top:none;box-shadow:0 0 1px #c9ccd0"></div>
<div class="t" style="left:1255.50px;top:865.95px;font-size:14px;font-weight:normal;color:#1f1f1f;transform:scaleX(0.9345);transform-origin:0 0;">Ratios</div>
<div class="a" style="left:1255px;top:883px;width:39px;height:2px;background:#1d7a3c"></div>
</body></html>
